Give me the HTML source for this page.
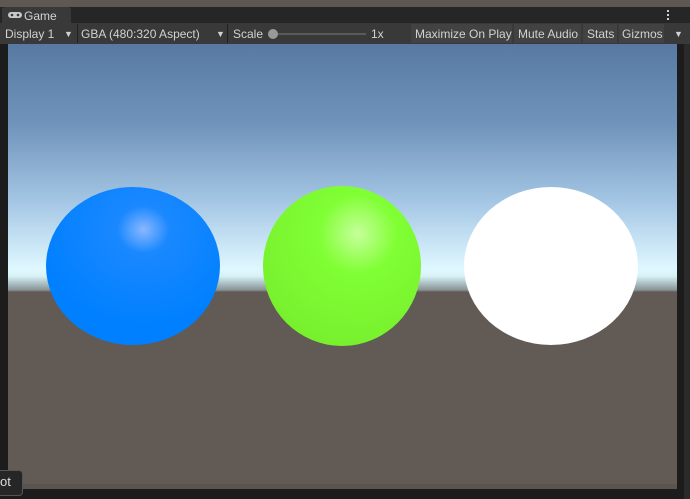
<!DOCTYPE html><html><head><style>
body{margin:0;width:690px;height:499px;overflow:hidden;background:#1c1c1c;font-family:"Liberation Sans",sans-serif;position:relative}
.a{position:absolute}
.t{color:#d2d2d2;font-size:12px;line-height:20px;white-space:nowrap}
</style></head><body>
<div class="a" style="left:0;top:0;width:690px;height:7px;background:#5e5853"></div>
<div class="a" style="left:0;top:7px;width:690px;height:16px;background:#262626"></div>
<div class="a" style="left:2px;top:7px;width:69px;height:17px;background:#393939;border-radius:3px 3px 0 0"></div>
<svg class="a" style="left:8px;top:11px" width="14" height="8"><rect x="0" y="1" width="14" height="6" rx="3" fill="#c8c8c8"/><circle cx="4" cy="4" r="1.3" fill="#393939"/><circle cx="10" cy="4" r="1.3" fill="#393939"/></svg>
<div class="a t" style="left:24px;top:6px">Game</div>
<div class="a" style="left:667px;top:10px;width:2px;height:12px;background:repeating-linear-gradient(#d0d0d0 0 2px,transparent 2px 4px)"></div>
<div class="a" style="left:0;top:23px;width:690px;height:21px;background:#393939"></div>
<div class="a t" style="left:5px;top:24px">Display 1</div>
<div class="a t" style="left:64px;top:24px;font-size:9px">▼</div>
<div class="a" style="left:77px;top:24px;width:1px;height:19px;background:#222"></div>
<div class="a t" style="left:81px;top:24px">GBA (480:320 Aspect)</div>
<div class="a t" style="left:216px;top:24px;font-size:9px">▼</div>
<div class="a" style="left:227px;top:24px;width:1px;height:19px;background:#222"></div>
<div class="a t" style="left:233px;top:24px">Scale</div>
<div class="a" style="left:272px;top:33px;width:94px;height:2px;background:#5a5a5a"></div>
<div class="a" style="left:268px;top:29px;width:10px;height:10px;border-radius:50%;background:#999"></div>
<div class="a t" style="left:371px;top:24px">1x</div>
<div class="a" style="left:411px;top:24px;width:101px;height:19px;background:#424242"></div>
<div class="a t" style="left:415px;top:24px">Maximize On Play</div>
<div class="a" style="left:514px;top:24px;width:67px;height:19px;background:#424242"></div>
<div class="a t" style="left:518px;top:24px">Mute Audio</div>
<div class="a" style="left:583px;top:24px;width:34px;height:19px;background:#424242"></div>
<div class="a t" style="left:587px;top:24px">Stats</div>
<div class="a" style="left:619px;top:24px;width:45px;height:19px;background:#424242"></div>
<div class="a t" style="left:622px;top:24px">Gizmos</div>
<div class="a t" style="left:674px;top:24px;font-size:9px">▼</div>
<div class="a" style="left:684px;top:44px;width:6px;height:455px;background:#2a2a2a"></div>
<div class="a" style="left:8px;top:44px;width:669px;height:445px;background:linear-gradient(#587aa2 0px,#6f93ba 80px,#a6c8e6 160px,#dff8ff 225px,#d8f2f6 232px,#a8bcc0 240px,#8a9294 246px,#615a55 248px,#615a55 445px)"></div>
<div class="a" style="left:8px;top:484px;width:669px;height:5px;background:#5a5450"></div>
<svg class="a" style="left:0;top:0" width="690" height="499">
<defs><radialGradient id="g" cx="0.6" cy="0.3" r="0.7"><stop offset="0" stop-color="#c6ff9a"/><stop offset="0.35" stop-color="#80ff34"/><stop offset="1" stop-color="#78f02e"/></radialGradient>
<radialGradient id="b" cx="0.56" cy="0.27" r="0.6"><stop offset="0" stop-color="#8ab8ff"/><stop offset="0.25" stop-color="#1a88ff"/><stop offset="1" stop-color="#0080ff"/></radialGradient></defs>
<ellipse cx="133" cy="266" rx="87" ry="79" fill="url(#b)"/>
<ellipse cx="342" cy="266" rx="79" ry="80" fill="url(#g)"/>
<ellipse cx="551" cy="266" rx="87" ry="79" fill="#fff"/>
</svg>
<div class="a" style="left:-6px;top:470px;width:27px;height:24px;background:#262626;border:1px solid #555;border-radius:4px"></div>
<div class="a t" style="left:0;top:472px;font-size:13px;color:#ddd">ot</div>
</body></html>
